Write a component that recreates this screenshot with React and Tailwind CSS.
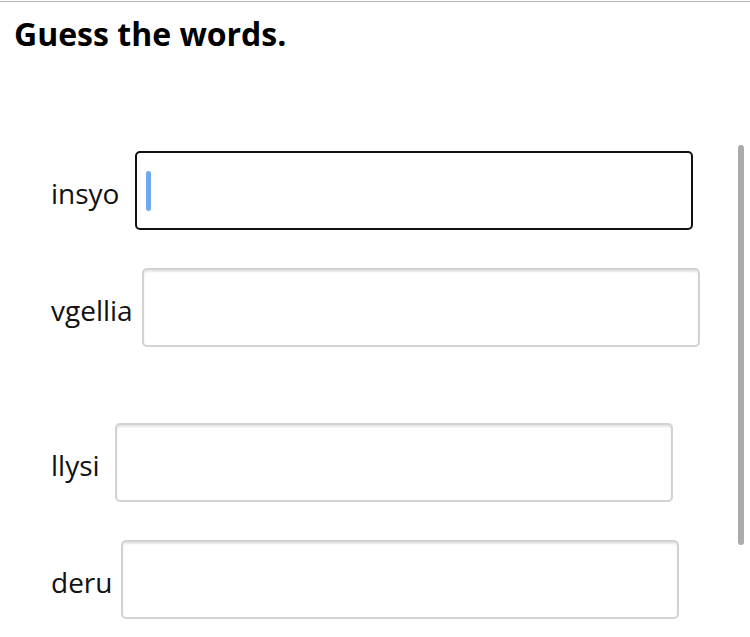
export default function App() {
  const font = { fontFamily: '"Open Sans", "Noto Sans", sans-serif' };
  const Field = ({ focused }) =>
    focused ? (
      <div className="w-[558px] h-[79px] rounded-[5px] border-2 border-[#111] bg-white flex items-center pl-[9px]">
        <div className="w-[5px] h-[40px] rounded-full bg-[#72a9ee]" />
      </div>
    ) : (
      <div className="w-[558px] h-[79px] rounded-[5px] border-2 border-[#d2d2d2] bg-white shadow-[inset_0_2px_2px_rgba(0,0,0,0.10)]" />
    );
  const Row = ({ label, w, focused, mt }) => (
    <div className={`flex items-center pl-[51px] ${mt}`}>
      <span className={`${w} mt-[4px] text-[28px] text-[#111] leading-none`} style={font}>{label}</span>
      <Field focused={focused} />
    </div>
  );
  return (
    <div className="relative w-[750px] h-[637px] bg-white overflow-hidden" style={font}>
      <div className="h-[2px] border-t border-[#b0b0b0] mt-[1px]" />
      <h1 className="pl-[14px] pt-[11px] text-[32px] font-bold leading-[40px] text-black">Guess the words.</h1>
      <div className="flex flex-col">
        <Row label="insyo" w="w-[84px]" focused mt="mt-[97px]" />
        <Row label="vgellia" w="w-[91px]" mt="mt-[38px]" />
        <Row label="llysi" w="w-[64px]" mt="mt-[76px]" />
        <Row label="deru" w="w-[70px]" mt="mt-[38px]" />
      </div>
      <div className="absolute left-[738px] top-[145px] w-[6px] h-[400px] rounded-full bg-[#ababab]" />
    </div>
  );
}
